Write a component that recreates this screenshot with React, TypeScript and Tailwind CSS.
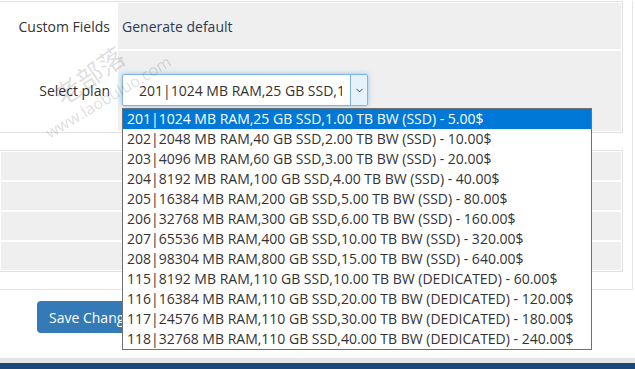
import { ChevronDown } from 'lucide-react'

const PLANS = [
  '201|1024 MB RAM,25 GB SSD,1.00 TB BW (SSD) - 5.00$',
  '202|2048 MB RAM,40 GB SSD,2.00 TB BW (SSD) - 10.00$',
  '203|4096 MB RAM,60 GB SSD,3.00 TB BW (SSD) - 20.00$',
  '204|8192 MB RAM,100 GB SSD,4.00 TB BW (SSD) - 40.00$',
  '205|16384 MB RAM,200 GB SSD,5.00 TB BW (SSD) - 80.00$',
  '206|32768 MB RAM,300 GB SSD,6.00 TB BW (SSD) - 160.00$',
  '207|65536 MB RAM,400 GB SSD,10.00 TB BW (SSD) - 320.00$',
  '208|98304 MB RAM,800 GB SSD,15.00 TB BW (SSD) - 640.00$',
  '115|8192 MB RAM,110 GB SSD,10.00 TB BW (DEDICATED) - 60.00$',
  '116|16384 MB RAM,110 GB SSD,20.00 TB BW (DEDICATED) - 120.00$',
  '117|24576 MB RAM,110 GB SSD,30.00 TB BW (DEDICATED) - 180.00$',
  '118|32768 MB RAM,110 GB SSD,40.00 TB BW (DEDICATED) - 240.00$',
]

// faint site watermark stamped over the screenshot
function Watermark({ cn, url }: { cn: string; url: string }) {
  return (
    <>
      <div
        className={`pointer-events-none absolute select-none whitespace-nowrap -translate-x-1/2 -translate-y-1/2 -rotate-[35deg] text-[26px] leading-none text-[rgba(0,0,0,0.15)] font-['Noto_Sans_CJK_SC',sans-serif] ${cn}`}
      >
        老部落
      </div>
      <div
        className={`pointer-events-none absolute select-none whitespace-nowrap -translate-x-1/2 -translate-y-1/2 -rotate-[31deg] text-[16px] leading-none text-[rgba(0,0,0,0.15)] ${url}`}
      >
        www.laobuluo.com
      </div>
    </>
  )
}

function PlanSelect() {
  return (
    <div className="relative self-start mt-[23px]">
      <div className="flex h-[32px] w-[246px] rounded-[2px] border border-[#7fb4e6] shadow-[0_0_5px_rgba(102,175,233,0.7)] bg-white">
        <div className="flex-1 overflow-hidden whitespace-nowrap pl-[16px] pr-[8px] flex items-center text-[14px] text-[#333]">
          <span className="overflow-hidden">{PLANS[0]}</span>
        </div>
        <div className="w-[17px] flex items-center justify-center bg-[#e5f1fb] border-l border-[#7fb4e6]">
          <ChevronDown size={11} strokeWidth={2} className="text-[#333]" />
        </div>
      </div>

      {/* Open dropdown list */}
      <div className="absolute left-0 top-[34px] z-10 w-[470px] border border-[#707070] bg-white">
        {PLANS.map((p, i) => (
          <div
            key={p}
            className={`h-[20px] leading-[20px] pl-[4px] text-[14px] whitespace-nowrap ${
              i === 0 ? 'bg-[#0078d7] text-white' : 'text-[#333]'
            }`}
          >
            {p}
          </div>
        ))}
      </div>
    </div>
  )
}

export default function App() {
  return (
    <div className="relative w-[635px] h-[369px] overflow-hidden bg-white font-['Open_Sans',sans-serif] text-[#333]">
      {/* Tab content box */}
      <div className="w-[633px] border-r border-b border-[#e6e6e6] pr-[9px] pb-[17px]">
        {/* Form table */}
        <div className="mt-[1px] border border-l-0 border-[#e0e0e0] p-px flex flex-col gap-[2px]">
          <div className="flex h-[46px]">
            <div className="w-[116px] flex items-center justify-end pr-[7px] text-[14px]">Custom Fields</div>
            <div className="flex-1 ml-px bg-[#efefef] flex items-center pl-[4px] text-[14px] text-[#2f3a4f]">
              Generate default
            </div>
          </div>
          <div className="flex h-[80px]">
            <div className="w-[116px] flex items-center justify-end pr-[7px] pb-[2px] text-[14px]">Select plan</div>
            <div className="flex-1 ml-px bg-[#efefef] flex pl-[4px]">
              <PlanSelect />
            </div>
          </div>
        </div>

        {/* Second table */}
        <div className="mt-[17px] border border-l-0 border-[#e0e0e0] p-px flex flex-col gap-[2px]">
          <div className="h-[28px] bg-[#efefef]" />
          <div className="h-[28px] bg-[#efefef]" />
          <div className="h-[28px] bg-[#efefef]" />
          <div className="h-[28px] bg-[#efefef]" />
        </div>
      </div>

      <div className="flex pl-[37px] mt-[11px]">
        <button className="h-[32px] px-[12px] rounded-[4px] bg-[#337ab7] text-white text-[14px]">
          Save Changes
        </button>
      </div>

      {/* Footer */}
      <div className="mt-[25px] h-[5px] bg-[#e6e6e6]" />
      <div className="h-[10px] bg-[#1b4a7a]" />

      <Watermark cn="left-[89px] top-[75px]" url="left-[108px] top-[97px]" />
      <Watermark cn="left-[460px] top-[248px]" url="left-[483px] top-[267px]" />
    </div>
  )
}
